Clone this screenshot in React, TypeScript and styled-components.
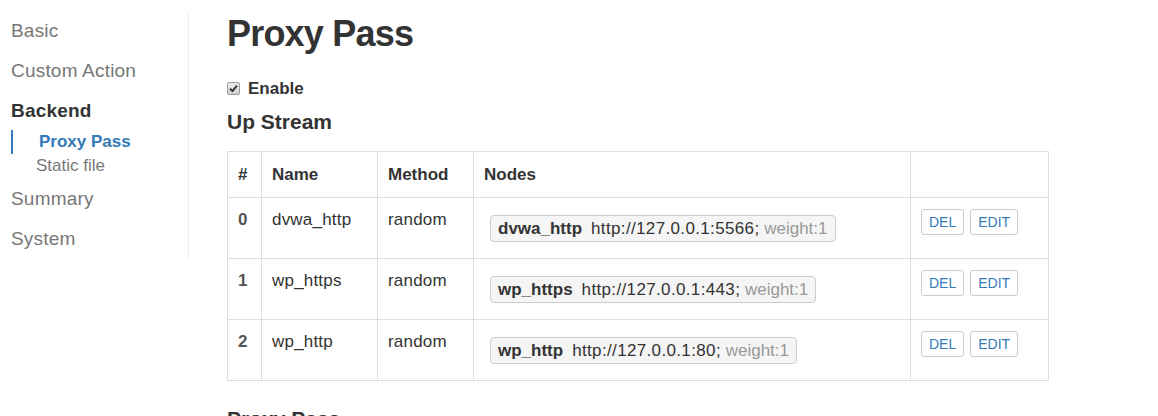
import styled, { createGlobalStyle } from 'styled-components';

const GlobalStyle = createGlobalStyle`
  html, body {
    margin: 0;
    padding: 0;
    background: #fff;
  }
  body {
    font-family: "Liberation Sans", Arial, sans-serif;
    color: #333;
    font-size: 17px;
  }`

const Page = styled.div`
  display: flex;
  align-items: flex-start;
  width: 1158px;
  height: 416px;
  overflow: hidden;`

const Sidebar = styled.nav`
  box-sizing: border-box;
  width: 189px;
  flex: none;
  margin-top: 11px;
  padding-left: 11px;
  border-right: 1px solid #eee;
  display: flex;
  flex-direction: column;`

const NavItem = styled.div<{ $header?: boolean }>`
  height: ${p => (p.$header ? 39 : 40)}px;
  line-height: ${p => (p.$header ? 39 : 40)}px;
  font-size: 19px;
  letter-spacing: 0.2px;
  color: ${p => (p.$header ? '#333' : '#777')};
  font-weight: ${p => (p.$header ? 'bold' : 'normal')};
  white-space: nowrap;`

const SubList = styled.div`
  display: flex;
  flex-direction: column;
  margin-bottom: 1px;`

const SubItem = styled.div<{ $active?: boolean }>`
  height: 24px;
  line-height: 24px;
  font-size: 17px;
  white-space: nowrap;
  color: ${p => (p.$active ? '#337ab7' : '#777')};
  font-weight: ${p => (p.$active ? 'bold' : 'normal')};
  border-left: ${p => (p.$active ? '2px solid #337ab7' : '0')};
  padding-left: ${p => (p.$active ? 26 : 25)}px;`

const Main = styled.main`
  margin-left: 38px;
  padding-top: 14px;
  display: flex;
  flex-direction: column;`

const Title = styled.h1`
  margin: 0 0 23px;
  font-size: 36px;
  line-height: 40px;
  letter-spacing: -0.8px;
  font-weight: bold;
  color: #333;`

const EnableRow = styled.label`
  display: flex;
  align-items: center;
  gap: 8px;
  height: 24px;
  font-size: 17px;
  font-weight: bold;
  margin-bottom: 9px;`

const CheckBox = styled.span`
  box-sizing: border-box;
  width: 13px;
  height: 13px;
  margin-top: -1px;
  border: 1px solid #9a9a9a;
  border-radius: 2px;
  background: linear-gradient(#ececec, #d2d2d2);
  display: flex;
  align-items: center;
  justify-content: center;`

const SectionTitle = styled.h3<{ $gap?: number }>`
  margin: ${p => p.$gap ?? 0}px 0 18px;
  font-size: 21px;
  line-height: 23px;
  font-weight: bold;
  color: #333;`

const Table = styled.table`
  width: 821px;
  table-layout: fixed;
  border-collapse: collapse;
  margin-bottom: 24px;
  font-size: 17px;

  th, td {
    border: 1px solid #ddd;
    padding: 10px;
    text-align: left;
    vertical-align: top;
    line-height: 24px;
  }

  th {
    font-weight: bold;
    height: 25px;
    line-height: 25px;
    vertical-align: middle;
  }

  td {
    height: 40px;
    letter-spacing: 0.2px;
  }`

const IndexCell = styled.td`
  font-weight: bold;
  color: #555;`

const NodeBadge = styled.span`
  display: inline-block;
  margin: 7px 6px 0;
  padding: 0 7px;
  height: 25px;
  line-height: 25px;
  border: 1px solid #ccc;
  border-radius: 4px;
  background: #f5f5f5;
  white-space: nowrap;
  letter-spacing: 0;`

const NodeName = styled.b`
  margin-right: 9px;
  color: #333;`

const NodeUrl = styled.span`
  color: #333;
  letter-spacing: 0.35px;`

const NodeWeight = styled.span`
  color: #999;`

const Actions = styled.div`
  display: flex;
  gap: 6px;
  padding-top: 1px;`

const SmallButton = styled.button`
  box-sizing: border-box;
  height: 26px;
  padding: 0 7px;
  font-family: "Liberation Sans", Arial, sans-serif;
  font-size: 14px;
  line-height: 24px;
  color: #337ab7;
  background: #fff;
  border: 1px solid #ccc;
  border-radius: 3px;
  cursor: pointer;`

type Upstream = {
  name: string,
  method: string,
  url: string,
  weight: number
};

const upstreams: Upstream[] = [
  { name: 'dvwa_http', method: 'random', url: 'http://127.0.0.1:5566', weight: 1 },
  { name: 'wp_https', method: 'random', url: 'http://127.0.0.1:443', weight: 1 },
  { name: 'wp_http', method: 'random', url: 'http://127.0.0.1:80', weight: 1 },
];

function CheckMark() {
  return (
    <svg width="9" height="9" viewBox="0 0 9 9">
      <path d="M1 4.6 L3.4 7 L8 1.6" fill="none" stroke="#333" strokeWidth="1.9" />
    </svg>
  )
}

export default function App() {
  return (
    <Page>
      <GlobalStyle />
      <Sidebar>
        <NavItem>Basic</NavItem>
        <NavItem>Custom Action</NavItem>
        <NavItem $header>Backend</NavItem>
        <SubList>
          <SubItem $active>Proxy Pass</SubItem>
          <SubItem>Static file</SubItem>
        </SubList>
        <NavItem>Summary</NavItem>
        <NavItem>System</NavItem>
      </Sidebar>
      <Main>
        <Title>Proxy Pass</Title>
        <EnableRow>
          <CheckBox><CheckMark /></CheckBox>
          Enable
        </EnableRow>
        <SectionTitle>Up Stream</SectionTitle>
        <Table>
          <colgroup>
            <col style={{ width: 34 }} />
            <col style={{ width: 116 }} />
            <col style={{ width: 96 }} />
            <col style={{ width: 437 }} />
            <col style={{ width: 138 }} />
          </colgroup>
          <thead>
            <tr>
              <th>#</th>
              <th>Name</th>
              <th>Method</th>
              <th>Nodes</th>
              <th></th>
            </tr>
          </thead>
          <tbody>
            {upstreams.map((u, i) =>
              <tr key={u.name}>
                <IndexCell>{i}</IndexCell>
                <td>{u.name}</td>
                <td>{u.method}</td>
                <td>
                  <NodeBadge>
                    <NodeName>{u.name}</NodeName>
                    <NodeUrl>{u.url};</NodeUrl> <NodeWeight>weight:{u.weight}</NodeWeight>
                  </NodeBadge>
                </td>
                <td>
                  <Actions>
                    <SmallButton>DEL</SmallButton>
                    <SmallButton>EDIT</SmallButton>
                  </Actions>
                </td>
              </tr>
            )}
          </tbody>
        </Table>
        <SectionTitle $gap={2}>Proxy Pass</SectionTitle>
      </Main>
    </Page>
  )
}
